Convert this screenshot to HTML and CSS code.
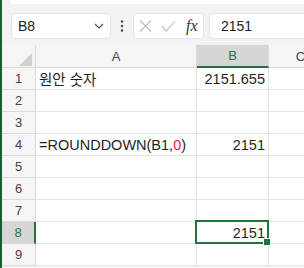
FILE: index.html
```html
<!DOCTYPE html>
<html lang="ko">
<head>
  <meta charset="UTF-8">
  <title>ROUNDDOWN</title>
  <link rel="stylesheet" href="styles.css">
</head>
<body>
  <div class="app">
    <div class="edge"></div>
    <div class="main">
      <div class="ribbon-tail"></div>
      <div class="formula-row">
        <div class="name-box">
          <span>B8</span>
          <svg class="chevron" width="10" height="6" viewBox="0 0 10 6"><path d="M1 1l4 4 4-4" fill="none" stroke="#555" stroke-width="1.2"/></svg>
        </div>
        <div class="more">
          <svg width="4" height="12" viewBox="0 0 4 12"><circle cx="2" cy="1.5" r="1.2" fill="#444"/><circle cx="2" cy="6" r="1.2" fill="#444"/><circle cx="2" cy="10.5" r="1.2" fill="#444"/></svg>
        </div>
        <div class="func-box">
          <svg width="13" height="12" viewBox="0 0 13 12"><path d="M1 0.5l11 11M12 0.5l-11 11" stroke="#bdbdbd" stroke-width="1.1" fill="none"/></svg>
          <svg width="15" height="12" viewBox="0 0 15 12"><path d="M1 6.5l4.5 4.5 8.5-10" stroke="#bdbdbd" stroke-width="1.1" fill="none"/></svg>
          <span class="fx">fx</span>
        </div>
        <div class="formula-input">2151</div>
      </div>

      <div class="sheet">
        <div class="hd corner"><span class="tri"></span></div>
        <div class="hd col">A</div>
        <div class="hd col sel-col">B</div>
        <div class="hd col">C</div>

        <div class="hd row">1</div>
        <div class="cell">원안 숫자</div>
        <div class="cell num">2151.655</div>
        <div class="cell"></div>

        <div class="hd row">2</div>
        <div class="cell"></div><div class="cell"></div><div class="cell"></div>

        <div class="hd row">3</div>
        <div class="cell"></div><div class="cell"></div><div class="cell"></div>

        <div class="hd row">4</div>
        <div class="cell">=ROUNDDOWN(B1,<span class="red">0</span>)</div>
        <div class="cell num">2151</div>
        <div class="cell"></div>

        <div class="hd row">5</div>
        <div class="cell"></div><div class="cell"></div><div class="cell"></div>

        <div class="hd row">6</div>
        <div class="cell"></div><div class="cell"></div><div class="cell"></div>

        <div class="hd row">7</div>
        <div class="cell"></div><div class="cell"></div><div class="cell"></div>

        <div class="hd row sel-row">8</div>
        <div class="cell"></div>
        <div class="cell num active">2151</div>
        <div class="cell"></div>

        <div class="hd row">9</div>
        <div class="cell"></div><div class="cell"></div><div class="cell"></div>
      </div>
    </div>
  </div>
</body>
</html>
```

FILE: styles.css
```css
* {
  box-sizing: border-box;
}

body {
  margin: 0;
  width: 304px;
  height: 268px;
  overflow: hidden;
  background-color: #f3f3f3;
  font-family: 'Liberation Sans', 'Noto Sans CJK KR', Arial, sans-serif;
  color: #222;
}

.app {
  display: flex;
  height: 268px;
}

.edge {
  width: 2px;
  flex-shrink: 0;
  background-color: #1d5a34;
}

.main {
  flex: 1;
  min-width: 0;
  overflow: hidden;
}

.ribbon-tail {
  height: 4px;
  margin-left: 8px;
  background-color: #fff;
  border-bottom-left-radius: 5px;
}

/* formula bar */

.formula-row {
  display: flex;
  height: 26px;
  margin: 9px 0 6px 9px;
}

.name-box {
  display: flex;
  align-items: center;
  justify-content: space-between;
  width: 100px;
  padding: 0 6px 0 6px;
  background-color: #fff;
  border: 1px solid #e6e6e6;
  border-radius: 4px;
  font-size: 14px;
}

.more {
  display: flex;
  align-items: center;
  justify-content: center;
  width: 22px;
}

.func-box {
  display: flex;
  align-items: center;
  gap: 9px;
  width: 71px;
  padding-left: 5px;
  background-color: #fff;
  border: 1px solid #e6e6e6;
  border-radius: 4px;
}

.fx {
  font-family: 'Liberation Serif', 'DejaVu Serif', serif;
  font-style: italic;
  font-size: 16px;
  color: #333;
  margin-left: 1px;
}

.formula-input {
  flex: 1;
  margin-left: 5px;
  padding-left: 11px;
  display: flex;
  align-items: center;
  background-color: #fff;
  border: 1px solid #e6e6e6;
  border-right: none;
  border-radius: 4px 0 0 4px;
  font-size: 14px;
}

/* grid */

.sheet {
  display: grid;
  grid-template-columns: 34px 161px 72px 64px;
  grid-template-rows: 23px repeat(9, 22px);
  width: 331px;
  background-color: #fff;
}

.hd {
  display: flex;
  align-items: center;
  justify-content: center;
  background-color: #f5f5f5;
  border-right: 1px solid #d9d9d9;
  border-bottom: 1px solid #d9d9d9;
  font-size: 13px;
  color: #444;
}

.corner {
  position: relative;
}

.tri {
  position: absolute;
  right: 3px;
  bottom: 1px;
  width: 0;
  height: 0;
  border-left: 13px solid transparent;
  border-bottom: 13px solid #cfcfcf;
}

.sel-col {
  background-color: #d6d6d6;
  border-bottom: 2px solid #217346;
  color: #217346;
}

.sel-row {
  background-color: #d6d6d6;
  border-right: 2px solid #217346;
  color: #217346;
}

.cell {
  display: flex;
  align-items: center;
  padding: 0 3px;
  border-right: 1px solid #e2e2e2;
  border-bottom: 1px solid #e2e2e2;
  font-size: 14.5px;
  color: #1f1f1f;
  white-space: nowrap;
}

.num {
  justify-content: flex-end;
}

.red {
  color: #e4262b;
}

.active {
  position: relative;
}

.active::after {
  content: "";
  position: absolute;
  left: -2px;
  top: -2px;
  right: -1px;
  bottom: -1px;
  border: 2px solid #217346;
}

.active::before {
  content: "";
  position: absolute;
  right: -3px;
  bottom: -3px;
  width: 6px;
  height: 6px;
  background-color: #217346;
  border: 1px solid #fff;
  z-index: 1;
}
```
